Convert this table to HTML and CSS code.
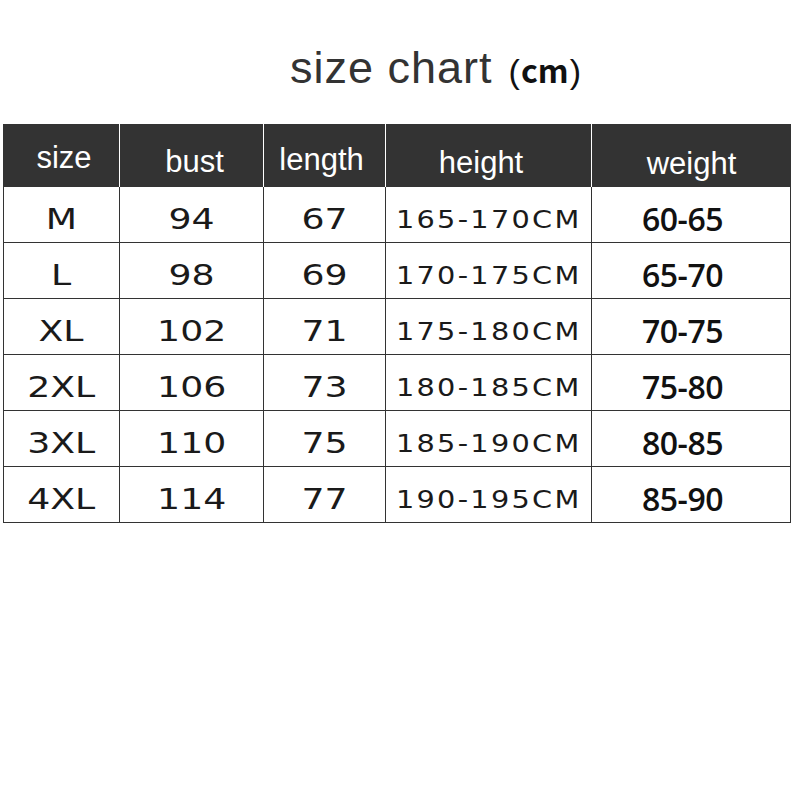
FILE: index.html
```html
<!DOCTYPE html>
<html>
<head>
<meta charset="utf-8">
<title>size chart</title>
<link rel="stylesheet" href="styles.css">
</head>
<body>
<h1 class="title">size chart<span class="unit">(<b>cm</b>)</span></h1>
<table class="chart">
  <colgroup>
    <col class="c1"><col class="c2"><col class="c3"><col class="c4"><col class="c5">
  </colgroup>
  <thead>
    <tr>
      <th class="h-size">size</th>
      <th class="h-bust">bust</th>
      <th class="h-length">length</th>
      <th class="h-height">height</th>
      <th class="h-weight">weight</th>
    </tr>
  </thead>
  <tbody>
    <tr><td><span class="w">M</span></td><td><span class="w">94</span></td><td><span class="w">67</span></td><td class="ht"><span class="w2">165-170CM</span></td><td class="wt">60-65</td></tr>
    <tr><td><span class="w">L</span></td><td><span class="w">98</span></td><td><span class="w">69</span></td><td class="ht"><span class="w2">170-175CM</span></td><td class="wt">65-70</td></tr>
    <tr><td><span class="w">XL</span></td><td><span class="w">102</span></td><td><span class="w">71</span></td><td class="ht"><span class="w2">175-180CM</span></td><td class="wt">70-75</td></tr>
    <tr><td><span class="w">2XL</span></td><td><span class="w">106</span></td><td><span class="w">73</span></td><td class="ht"><span class="w2">180-185CM</span></td><td class="wt">75-80</td></tr>
    <tr><td><span class="w">3XL</span></td><td><span class="w">110</span></td><td><span class="w">75</span></td><td class="ht"><span class="w2">185-190CM</span></td><td class="wt">80-85</td></tr>
    <tr><td><span class="w">4XL</span></td><td><span class="w">114</span></td><td><span class="w">77</span></td><td class="ht"><span class="w2">190-195CM</span></td><td class="wt">85-90</td></tr>
  </tbody>
</table>
</body>
</html>
```
FILE: styles.css
```css
html, body {
  margin: 0;
  padding: 0;
  background: #fff;
}

.title {
  margin: 0;
  height: 124px;
  box-sizing: border-box;
  padding: 45px 0 0 71px;
  text-align: center;
  font-family: "Liberation Sans", Arial, sans-serif;
  font-weight: normal;
  font-size: 45px;
  letter-spacing: 1px;
  line-height: 1;
  color: #333;
}

.unit {
  margin-left: 16px;
  font-family: "Liberation Sans", Arial, sans-serif;
  font-size: 34px;
  letter-spacing: 0;
  color: #111;
}

.unit b {
  margin: 0 1px;
  font-family: "Noto Sans CJK SC", "Noto Sans", sans-serif;
  font-weight: bold;
  font-size: 32px;
}

.chart {
  margin-left: 3px;
  width: 788px;
  table-layout: fixed;
  border-collapse: separate;
  border-spacing: 0;
}

.c1 { width: 117px; }
.c2 { width: 144px; }
.c3 { width: 122px; }
.c4 { width: 206px; }
.c5 { width: 199px; }

.chart th {
  height: 63px;
  box-sizing: border-box;
  padding: 22px 0 0 0;
  vertical-align: top;
  background: #333;
  color: #fff;
  font-family: "Liberation Sans", Arial, sans-serif;
  font-weight: normal;
  font-size: 31px;
  line-height: 1;
  text-align: center;
  border-right: 1px solid #fff;
}

.chart th:last-child {
  border-right: none;
}

.h-size { padding-top: 18px !important; padding-left: 6px !important; }
.h-bust { padding-left: 6px !important; }
.h-length { padding-top: 20px !important; padding-right: 6px !important; }
.h-height { padding-top: 23px !important; padding-right: 15px !important; }
.h-weight { padding-top: 24px !important; }

.chart td {
  height: 56px;
  box-sizing: border-box;
  padding: 18px 0 0 0;
  vertical-align: top;
  text-align: center;
  border-right: 1px solid #333;
  border-bottom: 1px solid #333;
  font-family: "DejaVu Sans", Verdana, sans-serif;
  font-size: 29px;
  line-height: 1;
  color: #1a1a1a;
}

.chart td:first-child {
  border-left: 1px solid #333;
}

.w {
  display: inline-block;
  transform: scaleX(1.25);
}

.chart td.ht {
  font-size: 25px;
  padding-top: 20px;
}

.w2 {
  display: inline-block;
  letter-spacing: 2px;
  transform: scaleX(1.15);
}

.chart td.wt {
  font-family: "Open Sans", "Liberation Sans", Arial, sans-serif;
  font-weight: 600;
  font-size: 32px;
  letter-spacing: -0.5px;
  padding-top: 16px;
  padding-right: 17px;
  color: #111;
}
```
